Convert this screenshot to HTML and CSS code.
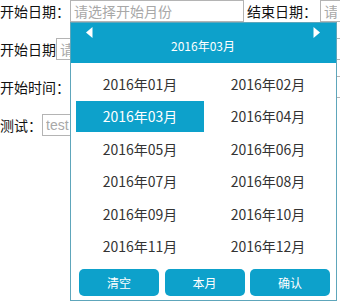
FILE: index.html
```html
<!DOCTYPE html>
<html lang="zh">
<head>
<meta charset="utf-8">
<link rel="stylesheet" href="styles.css">
</head>
<body>
<div class="form">
  <div class="row">
    <span class="label">开始日期：</span><input class="inp w-start" placeholder="请选择开始月份"><span class="label gap">结束日期：</span><input class="inp fill" placeholder="请选择结束月份">
  </div>
  <div class="row">
    <span class="label">开始日期</span><input class="inp fill" placeholder="请选择日期">
  </div>
  <div class="row">
    <span class="label">开始时间：</span><input class="inp fill" placeholder="">
  </div>
  <div class="row">
    <span class="label">测试：</span><input class="inp w-test" placeholder="test">
  </div>
</div>

<div class="picker">
  <div class="picker-head">
    <svg class="arrow" width="7" height="11" viewBox="0 0 7 11"><polygon points="6.5,0 0,5.5 6.5,11" fill="#fff"/></svg>
    <div class="title">2016年03月</div>
    <svg class="arrow" width="7" height="11" viewBox="0 0 7 11"><polygon points="0.5,0 7,5.5 0.5,11" fill="#fff"/></svg>
  </div>
  <div class="months">
    <div class="month">2016年01月</div>
    <div class="month">2016年02月</div>
    <div class="month active">2016年03月</div>
    <div class="month">2016年04月</div>
    <div class="month">2016年05月</div>
    <div class="month">2016年06月</div>
    <div class="month">2016年07月</div>
    <div class="month">2016年08月</div>
    <div class="month">2016年09月</div>
    <div class="month">2016年10月</div>
    <div class="month">2016年11月</div>
    <div class="month">2016年12月</div>
  </div>
  <div class="actions">
    <button class="btn">清空</button>
    <button class="btn">本月</button>
    <button class="btn">确认</button>
  </div>
</div>
</body>
</html>
```
FILE: styles.css
```css
html, body {
  margin: 0;
  padding: 0;
  background: #fff;
  overflow: hidden;
}
body {
  width: 340px;
  height: 303px;
  position: relative;
  font-family: "Noto Sans CJK SC", "Noto Sans", sans-serif;
  font-size: 14px;
  color: #111;
}
.form {
  display: flex;
  flex-direction: column;
  gap: 16px;
}
.row {
  display: flex;
  align-items: center;
  height: 22px;
  white-space: nowrap;
}
.label {
  flex-shrink: 0;
  line-height: 22px;
  color: #111;
}
.label.gap {
  margin-left: 3px;
  margin-right: 3px;
}
.inp {
  flex-shrink: 0;
  box-sizing: border-box;
  height: 22px;
  margin: 0;
  padding: 0 3px;
  border: 1px solid #b4b4b4;
  font-family: "Noto Sans CJK SC", "Noto Sans", sans-serif;
  font-size: 14px;
  color: #333;
  background: #fff;
  outline: none;
}
.inp::placeholder {
  color: #a8a8a8;
}
.w-start { width: 174px; }
.fill {
  flex: 1 1 auto;
  min-width: 0;
  width: 0;
  border-right: none;
}
.w-test { width: 120px; font-family: "Liberation Sans", sans-serif; }

.picker {
  position: absolute;
  left: 70px;
  top: 22px;
  width: 267px;
  height: 279px;
  box-sizing: border-box;
  border: 1px solid #5ea6bb;
  background: #fff;
  display: flex;
  flex-direction: column;
}
.picker-head {
  height: 40px;
  background: #0da1cb;
  display: flex;
  align-items: flex-start;
  padding: 4px 16px 0 15px;
  box-sizing: border-box;
}
.arrow {
  flex-shrink: 0;
  display: block;
}
.title {
  flex: 1;
  text-align: center;
  color: #fff;
  font-size: 12px;
  line-height: 16px;
  padding-top: 11px;
}
.months {
  display: grid;
  grid-template-columns: 128px 128px;
  grid-auto-rows: 31px;
  row-gap: 1.4px;
  padding: 5.5px 4px 0 5px;
}
.month {
  display: flex;
  align-items: center;
  justify-content: center;
  color: #333;
  font-size: 14px;
}
.month.active {
  background: #0da1cb;
  color: #fff;
}
.actions {
  display: flex;
  justify-content: space-between;
  padding: 0 6px 0 8px;
  margin-top: auto;
  margin-bottom: 4px;
}
.btn {
  width: 80px;
  height: 27px;
  border: none;
  border-radius: 5px;
  background: #0da1cb;
  color: #fff;
  font-family: "Noto Sans CJK SC", "Noto Sans", sans-serif;
  font-size: 12px;
  padding: 0;
}
```
